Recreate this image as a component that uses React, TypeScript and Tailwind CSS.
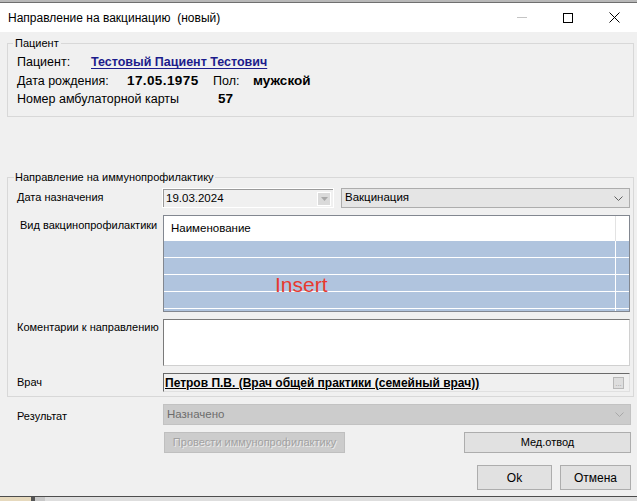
import React from "react";

function Chevron({ color = "#606060" }: { color?: string }) {
  return (
    <svg width="9" height="5" viewBox="0 0 9 5" className="shrink-0">
      <polyline points="0.5,0.5 4.5,4.5 8.5,0.5" fill="none" stroke={color} strokeWidth="1" />
    </svg>
  );
}

function Btn({
  children,
  className = "",
  disabled,
}: {
  children: React.ReactNode;
  className?: string;
  disabled?: boolean;
}) {
  return (
    <div
      className={
        "flex items-center justify-center border text-[11px] " +
        (disabled
          ? "border-[#bfbfbf] bg-[#cccccc] text-[#a2a2a2] [text-shadow:1px_1px_0_#ececec] "
          : "border-[#adadad] bg-[#e1e1e1] text-black ") +
        className
      }
    >
      {children}
    </div>
  );
}

export default function App() {
  const rows = [0, 1, 2, 3, 4];
  return (
    <div className="flex h-[501px] w-[637px] flex-col overflow-hidden bg-[#f0f0f0] font-['Liberation_Sans',Arial,sans-serif] text-black">
      {/* what is behind the window */}
      <div className="h-[3px] shrink-0 border-b border-[#6f6f6f] bg-[#b8b8b8]" />

      {/* title bar */}
      <div className="flex h-[29px] shrink-0 items-center bg-white">
        <span className="pl-[8px] text-[12px] leading-[14px]">Направление на вакцинацию&nbsp; (новый)</span>
        <div className="ml-auto flex h-full items-center">
          <div className="flex w-[46px] justify-center">
            <div className="h-px w-[10px] bg-[#c4c4c4]" />
          </div>
          <div className="flex w-[46px] justify-center">
            <div className="h-[10px] w-[10px] border border-black" />
          </div>
          <div className="flex w-[46px] justify-center">
            <svg width="11" height="11" viewBox="0 0 11 11">
              <path d="M0.5 0.5 L10.5 10.5 M10.5 0.5 L0.5 10.5" stroke="#000" strokeWidth="1" />
            </svg>
          </div>
        </div>
      </div>

      {/* body */}
      <div className="flex flex-1 flex-col pl-[7px] pr-[3px]">
        <fieldset className="mt-[4px] border border-[#d8d8d8] pb-[8px] pl-[9px]">
          <legend className="ml-[-4px] px-[2px] text-[11px] leading-[14px]">Пациент</legend>
          <div className="mt-[3px] flex h-[19px] items-center text-[12.5px]">
            <span className="w-[74px]">Пациент:</span>
            <span className="font-bold text-[#1c1c8c] underline decoration-1 underline-offset-2">
              Тестовый Пациент Тестович
            </span>
          </div>
          <div className="flex h-[18px] items-center text-[12.5px]">
            <span className="w-[110px]">Дата рождения:</span>
            <span className="w-[86px] text-[13.5px] font-bold tracking-[0.4px]">17.05.1975</span>
            <span className="w-[40px]">Пол:</span>
            <span className="text-[13.5px] font-bold">мужской</span>
          </div>
          <div className="flex h-[18px] items-center text-[12.5px]">
            <span className="w-[201px]">Номер амбулаторной карты</span>
            <span className="text-[13.5px] font-bold">57</span>
          </div>
        </fieldset>

        <fieldset className="mt-[53px] border border-[#d8d8d8] pb-[4px] pr-[3px]">
          <legend className="ml-[6px] px-[1px] text-[11px] leading-[14px]">Направление на иммунопрофилактику</legend>

          {/* date row */}
          <div className="mt-[4px] flex h-[20px] text-[11px]">
            <div className="w-[155px] pl-[9px] pt-[2px] leading-[14px]">Дата назначения</div>
            <div className="mt-px flex h-[18px] w-[170px] items-center border-l border-t border-[#9a9a9a] border-b-white border-r-white bg-[#f0f0f0] pl-[2px] outline outline-1 outline-white">
              <span className="text-[11.5px]">19.03.2024</span>
              <div className="ml-auto mr-[2px] flex h-[14px] w-[14px] items-center justify-center border border-white bg-[#dadada]">
                <svg width="7" height="4" viewBox="0 0 7 4">
                  <polygon points="0,0 7,0 3.5,4" fill="#a8a8a8" />
                </svg>
              </div>
            </div>
            <div className="ml-[8px] flex flex-1 items-center border border-[#adadad] bg-[#e5e5e5] pl-[3px] pr-[6px]">
              <span className="text-[11.5px]">Вакцинация</span>
              <span className="ml-auto">
                <Chevron />
              </span>
            </div>
          </div>

          {/* grid row */}
          <div className="mt-[7px] flex h-[97px] text-[11px]">
            <div className="w-[155px] pl-[12px] pt-[3px] leading-[14px]">Вид вакцинопрофилактики</div>
            <div className="relative flex flex-1 flex-col overflow-hidden border border-[#828790] bg-white">
              <div className="flex h-[25px] shrink-0">
                <div className="flex flex-1 items-center border-r border-[#e3e3e3] pl-[7px] text-[11.5px]">Наименование</div>
                <div className="w-[13px]" />
              </div>
              {rows.map((r) => (
                <div key={r} className="flex h-[17px] shrink-0 border-b border-white bg-[#b0c4de]">
                  <div className="flex-1 border-r border-white" />
                  <div className="w-[13px]" />
                </div>
              ))}
              <span className="absolute left-[111px] top-[57px] text-[21px] leading-[24px] text-[#e8392f]">Insert</span>
            </div>
          </div>

          {/* comment row */}
          <div className="mt-[7px] flex h-[47px] text-[11px]">
            <div className="w-[155px] pl-[9px] pt-[1px] leading-[14px]">Коментарии к направлению</div>
            <div className="flex-1 border border-[#7a7a7a] border-b-[#d0d0d0] border-r-[#d0d0d0] bg-white" />
          </div>

          {/* doctor row */}
          <div className="mt-[7px] flex h-[19px] text-[11px]">
            <div className="w-[155px] pl-[9px] pt-[2px] leading-[14px]">Врач</div>
            <div className="flex flex-1 items-center border border-[#6a6a6a] border-b-[#e0e0e0] border-r-[#e0e0e0] bg-[#f0f0f0] pl-[1px]">
              <span className="text-[12px] font-bold underline decoration-1 underline-offset-1">
                Петров П.В. (Врач общей практики (семейный врач))
              </span>
              <div className="ml-auto mr-[5px] flex h-[12px] w-[11px] items-end justify-center border border-[#b8b8b8] bg-[#dedede] text-[8px] leading-[8px] text-[#a0a0a0]">
                ...
              </div>
            </div>
          </div>
        </fieldset>

        {/* result */}
        <div className="mt-[7px] flex h-[21px] pr-[3px] text-[11px]">
          <div className="w-[156px] pl-[10px] pt-[5px] leading-[14px]">Результат</div>
          <div className="flex flex-1 items-center border border-[#c2c2c2] bg-[#cccccc] pl-[3px] pr-[6px]">
            <span className="text-[11.5px] text-[#6d6d6d]">Назначено</span>
            <span className="ml-auto">
              <Chevron color="#a8a8a8" />
            </span>
          </div>
        </div>

        <div className="mt-[7px] flex h-[21px] pl-[157px] pr-[3px]">
          <Btn disabled className="w-[181px]">
            Провести иммунопрофилактику
          </Btn>
          <Btn className="ml-auto w-[167px]">Мед.отвод</Btn>
        </div>

        <div className="mt-[12px] flex h-[25px] justify-end gap-[8px] pr-[3px]">
          <Btn className="w-[75px] text-[12px]">Ok</Btn>
          <Btn className="w-[71px] text-[12px]">Отмена</Btn>
        </div>
      </div>

      {/* what is below the window */}
      <div className="flex h-[5px] shrink-0 border-t border-[#4d4d4d] bg-[#dedede]">
        <div className="w-[31px] bg-[#e6d9bd]" />
        <div className="w-[4px] bg-[#555]" />
        <div className="w-[10px] bg-[#c8c8c8]" />
      </div>
    </div>
  );
}
